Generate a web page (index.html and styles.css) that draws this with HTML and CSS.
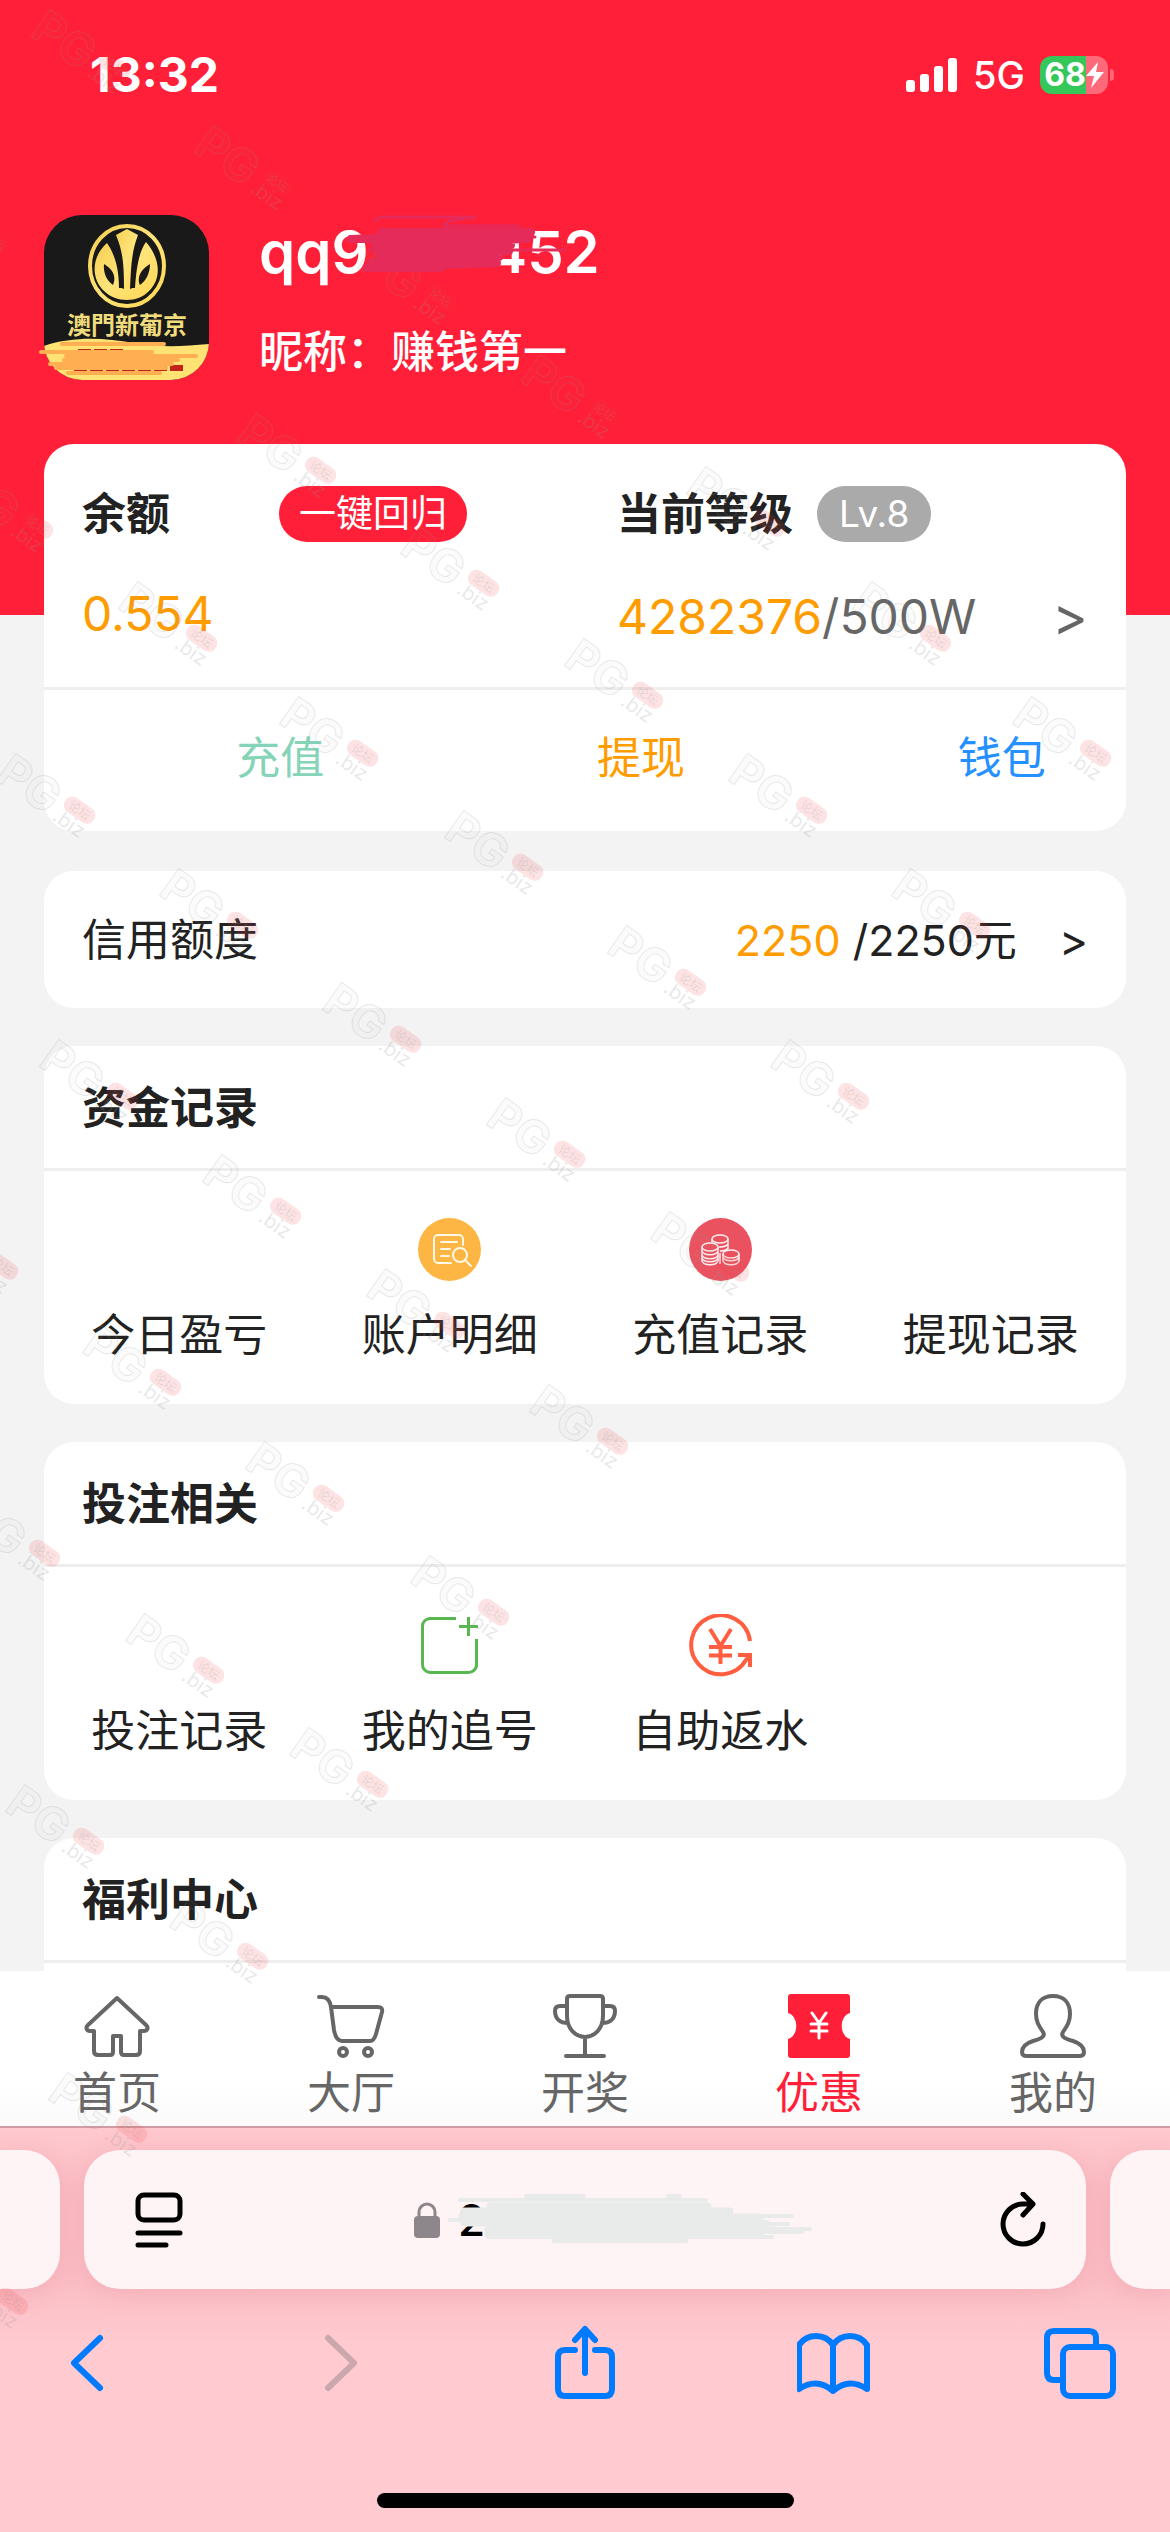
FILE: index.html
```html
<!DOCTYPE html>
<html lang="zh-CN">
<head>
    <meta charset="UTF-8">
    <meta name="viewport" content="width=device-width, initial-scale=1.0">
    <title>我的</title>
    <link rel="stylesheet" href="styles.css">
</head>
<body>

<main class="page">
    <div class="status-bar">
        <span class="time">13:32</span>
        <div class="status-icons">
            <svg width="52" height="34" viewBox="0 0 52 34" fill="#fff">
                <rect x="0" y="22" width="9" height="12" rx="3"/>
                <rect x="14" y="16" width="9" height="18" rx="3"/>
                <rect x="28" y="8" width="9" height="26" rx="3"/>
                <rect x="42" y="0" width="9" height="34" rx="3"/>
            </svg>
            <span class="network">5G</span>
            <div class="battery">
                <span>68</span>
                <svg width="18" height="26" viewBox="0 0 18 26" fill="#fff"><path d="M12 0 0 14h8L5 26 18 10h-8z"/></svg>
            </div>
        </div>
    </div>

    <header class="profile">
        <svg class="avatar" width="174" height="165" viewBox="-5 0 174 165">
            <defs>
                <clipPath id="avatarClip"><rect width="165" height="165" rx="38"/></clipPath>
                <linearGradient id="gold" x1="0" y1="0" x2="1" y2="1">
                    <stop offset="0" stop-color="#f6cf52"/>
                    <stop offset="0.5" stop-color="#ffe47a"/>
                    <stop offset="1" stop-color="#ffd650"/>
                </linearGradient>
            </defs>
            <g clip-path="url(#avatarClip)">
                <rect width="165" height="165" fill="#191919"/>
                <path d="M0 131C30 121 60 123 90 128S140 131 165 129v36H0z" fill="#ffe274"/>
            </g>
            <ellipse cx="83" cy="51" rx="37" ry="40" fill="none" stroke="url(#gold)" stroke-width="4"/>
            <path d="M63 28C47 42 47 64 60 76C72 88 94 88 105 76C119 62 115 42 102 27C94 38 92 58 91 73L75 73C75 52 70 38 63 28Z" fill="url(#gold)"/>
            <path d="M70 18C77 36 75 54 75 72L80 74H86L91 72C90 54 90 36 96 20Z" fill="#191919"/>
            <path d="M83 14 94 20C87 38 87 55 86 74H80C80 50 79 37 72 20Z" fill="url(#gold)"/>
            <path d="M60 49C73 57 71 66 69 70C63 66 59 58 60 49ZM106 49C93 57 94 66 96 70C102 66 106 58 106 49Z" fill="#191919"/>
            <text x="83" y="119" text-anchor="middle" class="avatar-text">澳門新葡京</text>
            <path d="M34 137H82M30 153H140" stroke="#c3241a" stroke-width="6" stroke-dasharray="13 3"/>
            <g stroke="#ffae52" stroke-width="4" stroke-linecap="round">
                <path d="M18 129H120M-3 137H108M22 141H152M20 145H134M6 149H128M12 153H122M24 158H116"/>
            </g>
        </svg>
        <div class="profile-info">
            <h1 class="username">qq9<svg class="scribble" width="120" height="60" viewBox="0 0 120 60" aria-hidden="true">
                <g stroke="#e52b5a" stroke-linecap="round" stroke-linejoin="round" fill="none">
                    <path d="M6 9 10 5H106L80 9 74 14H150M-20 25H166M0 38H196" stroke-width="3"/>
                    <path d="M12 20H162L-18 27H158L6 33H142L8 39H140L10 45H130L2 51H128L-2 56H72" stroke-width="8"/>
                </g>
            </svg>452</h1>
            <p class="nickname">昵称：赚钱第一</p>
        </div>
    </header>

    <section class="card account">
        <div class="account-top">
            <div class="balance">
                <div class="account-label">
                    <h2>余额</h2>
                    <button class="pill recall">一键回归</button>
                </div>
                <p class="amount">0.554</p>
            </div>
            <div class="level">
                <div class="account-label">
                    <h2>当前等级</h2>
                    <span class="pill level-badge">Lv.8</span>
                </div>
                <a class="amount level-link" href="#"><span><b>4282376</b>/500W</span><span class="arrow">&gt;</span></a>
            </div>
        </div>
        <nav class="account-actions">
            <a class="recharge" href="#">充值</a>
            <a class="withdraw" href="#">提现</a>
            <a class="wallet" href="#">钱包</a>
        </nav>
    </section>

    <a class="card credit" href="#">
        <span>信用额度</span>
        <span class="credit-value"><b>2250</b> /2250元</span>
        <span>&gt;</span>
    </a>

    <section class="card">
        <h2 class="card-title">资金记录</h2>
        <div class="menu">
            <a class="menu-item" href="#"><span class="menu-icon"></span>今日盈亏</a>
            <a class="menu-item" href="#">
                <svg class="menu-icon" viewBox="0 0 63 63">
                    <circle cx="31.5" cy="31.5" r="31.5" fill="#fdb544"/>
                    <g fill="none" stroke="#fff8e6" stroke-width="2" stroke-linecap="round">
                        <path d="M33 45H20a4 4 0 0 1-4-4V21a4 4 0 0 1 4-4H41a4 4 0 0 1 4 4V27M23 24H39M23 31H32M23 38H31"/>
                        <circle cx="42" cy="37" r="7"/>
                        <path d="M47 42 53 48"/>
                    </g>
                </svg>
                账户明细
            </a>
            <a class="menu-item" href="#">
                <svg class="menu-icon" viewBox="0 0 63 63">
                    <circle cx="31.5" cy="31.5" r="31.5" fill="#eb5260"/>
                    <g fill="none" stroke="#fff0f0" stroke-width="1.5">
                        <ellipse cx="31" cy="21" rx="8" ry="4"/>
                        <path d="M23 21V25M39 21V31M30 29Q37 29 39 26M31 33Q37 33 39 30"/>
                        <ellipse cx="21" cy="29" rx="8" ry="4"/>
                        <path d="M13 29V43C15 48 27 48 29 43V29M13 33C15 38 27 38 29 33M13 37C15 42 27 42 29 37M13 40C15 45 27 45 29 40"/>
                        <ellipse cx="42" cy="36" rx="8" ry="4"/>
                        <path d="M34 36V43C36 48 48 48 50 43V36M34 39C36 44 48 44 50 39M31 35V46"/>
                    </g>
                </svg>
                充值记录
            </a>
            <a class="menu-item" href="#"><span class="menu-icon"></span>提现记录</a>
        </div>
    </section>

    <section class="card">
        <h2 class="card-title">投注相关</h2>
        <div class="menu">
            <a class="menu-item" href="#"><span class="menu-icon"></span>投注记录</a>
            <a class="menu-item" href="#">
                <svg class="menu-icon" viewBox="0 0 63 63" fill="none" stroke="#59b752" stroke-width="3">
                    <path d="M38 4.500H12A7.500 7.500 0 0 0 4.500 12V50A8 8 0 0 0 12 58.500H50A8 8 0 0 0 58.500 50V25M50.500 3V22M41 12.500H60"/>
                </svg>
                我的追号
            </a>
            <a class="menu-item" href="#">
                <svg class="menu-icon" viewBox="0 0 63 63" fill="none" stroke="#ff5f40" stroke-width="4">
                    <path d="M61 27A29.500 29.500 0 1 0 57 46L61 41M49 41H61V53M21 15 31.500 32 42 15M31.500 32V50M20 33H43M20 41.500H43"/>
                </svg>
                自助返水
            </a>
        </div>
    </section>

    <section class="card">
        <h2 class="card-title">福利中心</h2>
        <div class="menu"></div>
    </section>
</main>

<nav class="tab-bar">
    <a href="#">
        <svg viewBox="0 0 66 64">
            <path d="M33 4 4 31C1 34 3 37 6 37H10V57Q10 61 14 61H26Q29 61 29 58V42H37V58Q37 61 40 61H52Q56 61 56 57V37H60C63 37 65 34 62 31Z"/>
        </svg>
        首页
    </a>
    <a href="#">
        <svg viewBox="0 0 66 64">
            <path d="M1 3H4C10 3 12 7 13 13L16 36Q18 47 24 47H52Q56 47 58 40L64 18Q65 13 60 13H14"/>
            <circle cx="25" cy="58" r="4"/><circle cx="50" cy="58" r="4"/>
        </svg>
        大厅
    </a>
    <a href="#">
        <svg viewBox="0 0 66 64">
            <path d="M15 5Q15 2 18 2H48Q51 2 51 5V22C51 34 43 43 33 43S15 34 15 22ZM15 12H8Q3 12 3 17C3 25 8 29 16 29M51 12H58Q63 12 63 17C63 25 58 29 50 29M33 43V62M14 62H52"/>
        </svg>
        开奖
    </a>
    <a class="active" href="#">
        <svg viewBox="0 0 66 64">
            <path class="ticket" d="M5 0H61Q64 0 64 3V19C53 22 53 42 64 45V61Q64 64 61 64H5Q2 64 2 61V45C13 42 13 22 2 19V3Q2 0 5 0Z"/>
            <path class="yen" d="M26 19 33 29 40 19M33 29V44M25 30H41M25 37H41"/>
        </svg>
        优惠
    </a>
    <a href="#">
        <svg viewBox="0 0 66 64">
            <path d="M33 2C22 2 16 9 16 20C16 28 19 32 23 38C26 43 20 45 13 47C4 50 2 54 2 58C2 61 4 62 7 62H59C62 62 64 61 64 58C64 54 62 50 53 47C46 45 40 43 43 38C47 32 50 28 50 20C50 9 44 2 33 2Z"/>
        </svg>
        我的
    </a>
</nav>

<footer class="browser">
    <div class="address-row">
        <div class="peek peek-left"></div>
        <div class="address">
            <button class="icon-button" aria-label="页面菜单">
                <svg width="50" height="56" viewBox="0 0 50 56" fill="none" stroke="#000" stroke-width="5" stroke-linecap="round">
                    <rect x="4" y="3" width="42" height="25" rx="6"/><path d="M4 41H46M4 53H32"/>
                </svg>
            </button>
            <label class="url">
                <svg width="26" height="36" viewBox="0 0 26 36"><rect y="14" width="26" height="22" rx="4" fill="#8d868b"/><path d="M5 15V10A8 8 0 0 1 21 10V15" fill="none" stroke="#8d868b" stroke-width="3"/></svg>
                <input type="text" value="2" aria-label="网址">
                <svg class="url-mask" width="364" height="50" viewBox="0 0 364 50" aria-hidden="true">
                    <g fill="none" stroke="#e9eaea" stroke-linecap="round" stroke-linejoin="round">
                        <path d="M12 6H258M78 2H136M220 2H232M0 26H60M40 43H324M106 47H238M300 22H344M300 30H340M290 35H362M300 38H354" stroke-width="4"/>
                        <path d="M42 12H260M16 17H282L14 23H312L16 29H318L40 36H326L40 40H312" stroke-width="7"/>
                    </g>
                </svg>
            </label>
            <button class="icon-button" aria-label="刷新">
                <svg width="50" height="56" viewBox="0 0 50 56" fill="none" stroke="#000" stroke-width="5" stroke-linecap="round" stroke-linejoin="round">
                    <path d="M47 32A20 20 0 1 1 27 12H37M27 2 37 12 27 23"/>
                </svg>
            </button>
        </div>
        <div class="peek peek-right"></div>
    </div>
    <div class="toolbar">
        <button class="icon-button" aria-label="后退"><svg viewBox="0 0 74 76"><path d="M40 13 14 38 40 63"/></svg></button>
        <button class="icon-button" aria-label="前进" disabled><svg viewBox="0 0 74 76"><path d="M22 13 48 38 22 63"/></svg></button>
        <button class="icon-button" aria-label="分享"><svg viewBox="0 0 74 76"><path d="M24 25H14Q7 25 7 32V64Q7 71 14 71H54Q61 71 61 64V32Q61 25 54 25H44M34 48V4M24 15 34 4 44 15"/></svg></button>
        <button class="icon-button" aria-label="书签"><svg viewBox="0 0 74 76"><path d="M36 66Q20 52 2 64V20C10 8 28 8 36 20C44 8 62 8 70 20V64Q52 52 36 66ZM36 20V66"/></svg></button>
        <button class="icon-button" aria-label="标签页"><svg viewBox="0 0 74 76"><path d="M18 55H12Q5 55 5 48V13Q5 6 12 6H47Q54 6 54 13V20"/><rect x="21" y="22" width="50" height="49" rx="7"/></svg></button>
    </div>
    <div class="home-indicator"></div>
</footer>

<svg class="watermark" aria-hidden="true">
    <defs>
        <g id="mark">
            <g transform="rotate(35)">
                <text class="mark-name" x="6" y="19">PG</text>
                <rect x="77" y="-13" width="34" height="17" rx="8"/>
                <text class="mark-forum" x="82" y="0">论坛</text>
                <text class="mark-biz" x="76" y="19">.biz</text>
            </g>
        </g>
    </defs>
    <use href="#mark" x="35" y="16"/>
    <use href="#mark" x="198" y="132"/>
    <use href="#mark" x="361" y="247"/>
    <use href="#mark" x="525" y="361"/>
    <use href="#mark" x="-85" y="190"/>
    <use href="#mark" x="241" y="420"/>
    <use href="#mark" x="-42" y="475"/>
    <use href="#mark" x="404" y="533"/>
    <use href="#mark" x="568" y="645"/>
    <use href="#mark" x="690" y="473"/>
    <use href="#mark" x="856" y="588"/>
    <use href="#mark" x="1016" y="703"/>
    <use href="#mark" x="122" y="588"/>
    <use href="#mark" x="283" y="703"/>
    <use href="#mark" x="448" y="817"/>
    <use href="#mark" x="732" y="760"/>
    <use href="#mark" x="895" y="875"/>
    <use href="#mark" x="611" y="932"/>
    <use href="#mark" x="0" y="760"/>
    <use href="#mark" x="163" y="875"/>
    <use href="#mark" x="326" y="989"/>
    <use href="#mark" x="490" y="1104"/>
    <use href="#mark" x="654" y="1218"/>
    <use href="#mark" x="774" y="1046"/>
    <use href="#mark" x="43" y="1046"/>
    <use href="#mark" x="206" y="1161"/>
    <use href="#mark" x="370" y="1275"/>
    <use href="#mark" x="533" y="1391"/>
    <use href="#mark" x="-77" y="1216"/>
    <use href="#mark" x="86" y="1332"/>
    <use href="#mark" x="249" y="1448"/>
    <use href="#mark" x="414" y="1562"/>
    <use href="#mark" x="-35" y="1503"/>
    <use href="#mark" x="129" y="1620"/>
    <use href="#mark" x="293" y="1734"/>
    <use href="#mark" x="9" y="1791"/>
    <use href="#mark" x="173" y="1906"/>
    <use href="#mark" x="52" y="2079"/>
    <use href="#mark" x="-67" y="2251"/>
</svg>

</body>
</html>
```
FILE: styles.css
```css
* {
    box-sizing: border-box;
}
body {
    margin: 0;
    height: 100vh;
    display: flex;
    flex-direction: column;
    overflow: hidden;
    position: relative;
    font-family: Inter, "Noto Sans CJK SC", sans-serif;
    font-size: 44px;
    line-height: 60px;
    color: #222;
    background-color: #f3f3f3;
}
h1, h2, p {
    margin: 0;
}
h2 {
    font-size: 44px;
    font-weight: 700;
}
a {
    color: inherit;
    text-decoration: none;
}
b {
    font-weight: 400;
    color: #ff9c00;
}
button {
    border: none;
    padding: 0;
    background: none;
    font: inherit;
    cursor: pointer;
}
svg {
    display: block;
}

/* Scrolling content */
.page {
    flex: 1;
    min-height: 0;
    overflow: hidden;
    padding: 0 44px;
    background: linear-gradient(#ff1f38 615px, #f3f3f3 615px);
}
.status-bar {
    display: flex;
    justify-content: space-between;
    align-items: center;
    height: 150px;
    padding: 0 18px 0 46px;
    color: #fff;
}
.time {
    font-size: 48px;
    font-weight: 700;
}
.status-icons {
    display: flex;
    align-items: center;
    gap: 15px;
}
.network {
    font-size: 38px;
    font-weight: 500;
}
.battery {
    display: flex;
    align-items: center;
    justify-content: center;
    position: relative;
    width: 68px;
    height: 38px;
    border-radius: 12px;
    font-size: 32px;
    font-weight: 700;
    background: linear-gradient(90deg, #35c759 46px, #ff6a7b 46px);
}
.battery::after {
    content: "";
    position: absolute;
    right: -6px;
    top: 13px;
    width: 4px;
    height: 12px;
    border-radius: 0 4px 4px 0;
    background-color: #ff6a7b;
}
.profile {
    display: flex;
    align-items: center;
    height: 294px;
    color: #fff;
}
.avatar {
    margin-left: -5px;
    flex-shrink: 0;
}
.avatar-text {
    font-family: "Noto Sans CJK TC", sans-serif;
    font-size: 24px;
    font-weight: 700;
    fill: #f0dc7c;
}
.profile-info {
    margin-left: 46px;
}
.username {
    display: flex;
    font-size: 58px;
    line-height: 80px;
    font-weight: 600;
}
.scribble {
    position: relative;
    z-index: 1;
    overflow: visible;
}
.nickname {
    margin-top: 30px;
    font-weight: 500;
}

/* Cards */
.card {
    display: block;
    margin-bottom: 38px;
    border-radius: 30px;
    background-color: #fff;
}
.card-title {
    height: 125px;
    padding: 32px 38px;
    border-bottom: 3px solid #eee;
}
.account {
    margin-bottom: 40px;
}
.account-top {
    display: grid;
    grid-template-columns: 535px 1fr;
    height: 246px;
    padding: 40px 38px 0;
    border-bottom: 3px solid #eee;
}
.account-label {
    display: flex;
    align-items: center;
}
.pill {
    height: 56px;
    border-radius: 28px;
    font-size: 37px;
    line-height: 56px;
    color: #fff;
}
.recall {
    margin-left: 109px;
    padding: 0 20px;
    background-color: #ff1f38;
}
.level-badge {
    margin-left: 24px;
    padding: 0 22px;
    background-color: #aaa;
}
.amount {
    margin-top: 40px;
    font-size: 48px;
    color: #ff9c00;
}
.level-link {
    display: flex;
    justify-content: space-between;
    margin-top: 43px;
    color: #666;
}
.arrow {
    font-size: 54px;
}
.account-actions {
    display: grid;
    grid-template-columns: repeat(3, 1fr);
    height: 141px;
    padding-top: 38px;
    text-align: center;
}
.account-actions a {
    padding-left: 112px;
}
.recharge {
    color: #85d4b8;
}
.withdraw {
    color: #ff9c00;
}
.wallet {
    color: #2590ff;
}
.credit {
    display: flex;
    align-items: center;
    height: 137px;
    padding: 0 38px;
}
.credit-value {
    margin-left: auto;
    margin-right: 42px;
    font-size: 43px;
}
.menu {
    display: grid;
    grid-template-columns: repeat(4, 1fr);
    height: 233px;
    padding-top: 47px;
}
.menu-item {
    display: flex;
    flex-direction: column;
    align-items: center;
}
.menu-icon {
    width: 63px;
    height: 63px;
    margin-bottom: 24px;
}

/* Bottom tabs */
.tab-bar {
    display: grid;
    grid-template-columns: repeat(5, 1fr);
    height: 155px;
    padding-top: 23px;
    color: #666;
    background: linear-gradient(#fff 110px, #fafafa);
}
.tab-bar a {
    display: flex;
    flex-direction: column;
    align-items: center;
    gap: 5px;
}
.tab-bar svg {
    width: 66px;
    height: 64px;
    overflow: visible;
    fill: none;
    stroke: #666;
    stroke-width: 4;
    stroke-linecap: round;
    stroke-linejoin: round;
}
.tab-bar .active {
    color: #ff1f38;
}
.tab-bar .ticket {
    fill: #ff1f38;
    stroke: none;
}
.tab-bar .yen {
    stroke: #fff;
    stroke-width: 3;
}

/* Browser controls */
.browser {
    height: 406px;
    border-top: 2px solid #cf9ca4;
    background: linear-gradient(#ffc9cf, #fbbdc4 60px, #fbbdc4 150px, #ffcbd1 220px);
}
.address-row {
    display: flex;
    gap: 24px;
    padding-top: 22px;
}
.peek, .address {
    height: 139px;
    background-color: #fff4f5;
    box-shadow: 0 4px 24px rgba(200, 90, 110, 0.15);
}
.peek {
    width: 60px;
}
.peek-left {
    border-radius: 0 36px 36px 0;
}
.peek-right {
    border-radius: 36px 0 0 36px;
}
.address {
    flex: 1;
    display: flex;
    justify-content: space-between;
    align-items: center;
    padding: 0 40px 0 50px;
    border-radius: 36px;
}
.url {
    display: flex;
    align-items: center;
    position: relative;
}
.url input {
    width: 308px;
    margin-left: 18px;
    padding: 0;
    border: none;
    outline: none;
    background: none;
    font: inherit;
    font-weight: 500;
}
.url-mask {
    position: absolute;
    left: 34px;
    top: 4px;
}
.toolbar {
    display: flex;
    justify-content: space-between;
    padding: 36px 54px 0 60px;
}
.toolbar svg {
    width: 74px;
    height: 76px;
    fill: none;
    stroke: #007aff;
    stroke-width: 6;
    stroke-linecap: round;
    stroke-linejoin: round;
}
.toolbar button:disabled svg {
    stroke: #cba8ad;
}
.home-indicator {
    width: 417px;
    height: 15px;
    margin: 92px auto 0;
    border-radius: 8px;
    background-color: #000;
}

/* Tiled site mark over the whole page */
.watermark {
    position: absolute;
    top: 0;
    left: 0;
    width: 100%;
    height: 100%;
    pointer-events: none;
}
.mark-name {
    font-size: 46px;
    font-weight: 700;
    fill: rgba(150, 150, 150, 0.04);
    stroke: rgba(150, 150, 150, 0.22);
    stroke-width: 1;
}
.watermark rect {
    fill: rgba(240, 60, 60, 0.14);
}
.mark-forum, .mark-biz {
    fill: rgba(150, 150, 150, 0.22);
}
.mark-forum {
    font-size: 12px;
}
.mark-biz {
    font-size: 20px;
}
```
